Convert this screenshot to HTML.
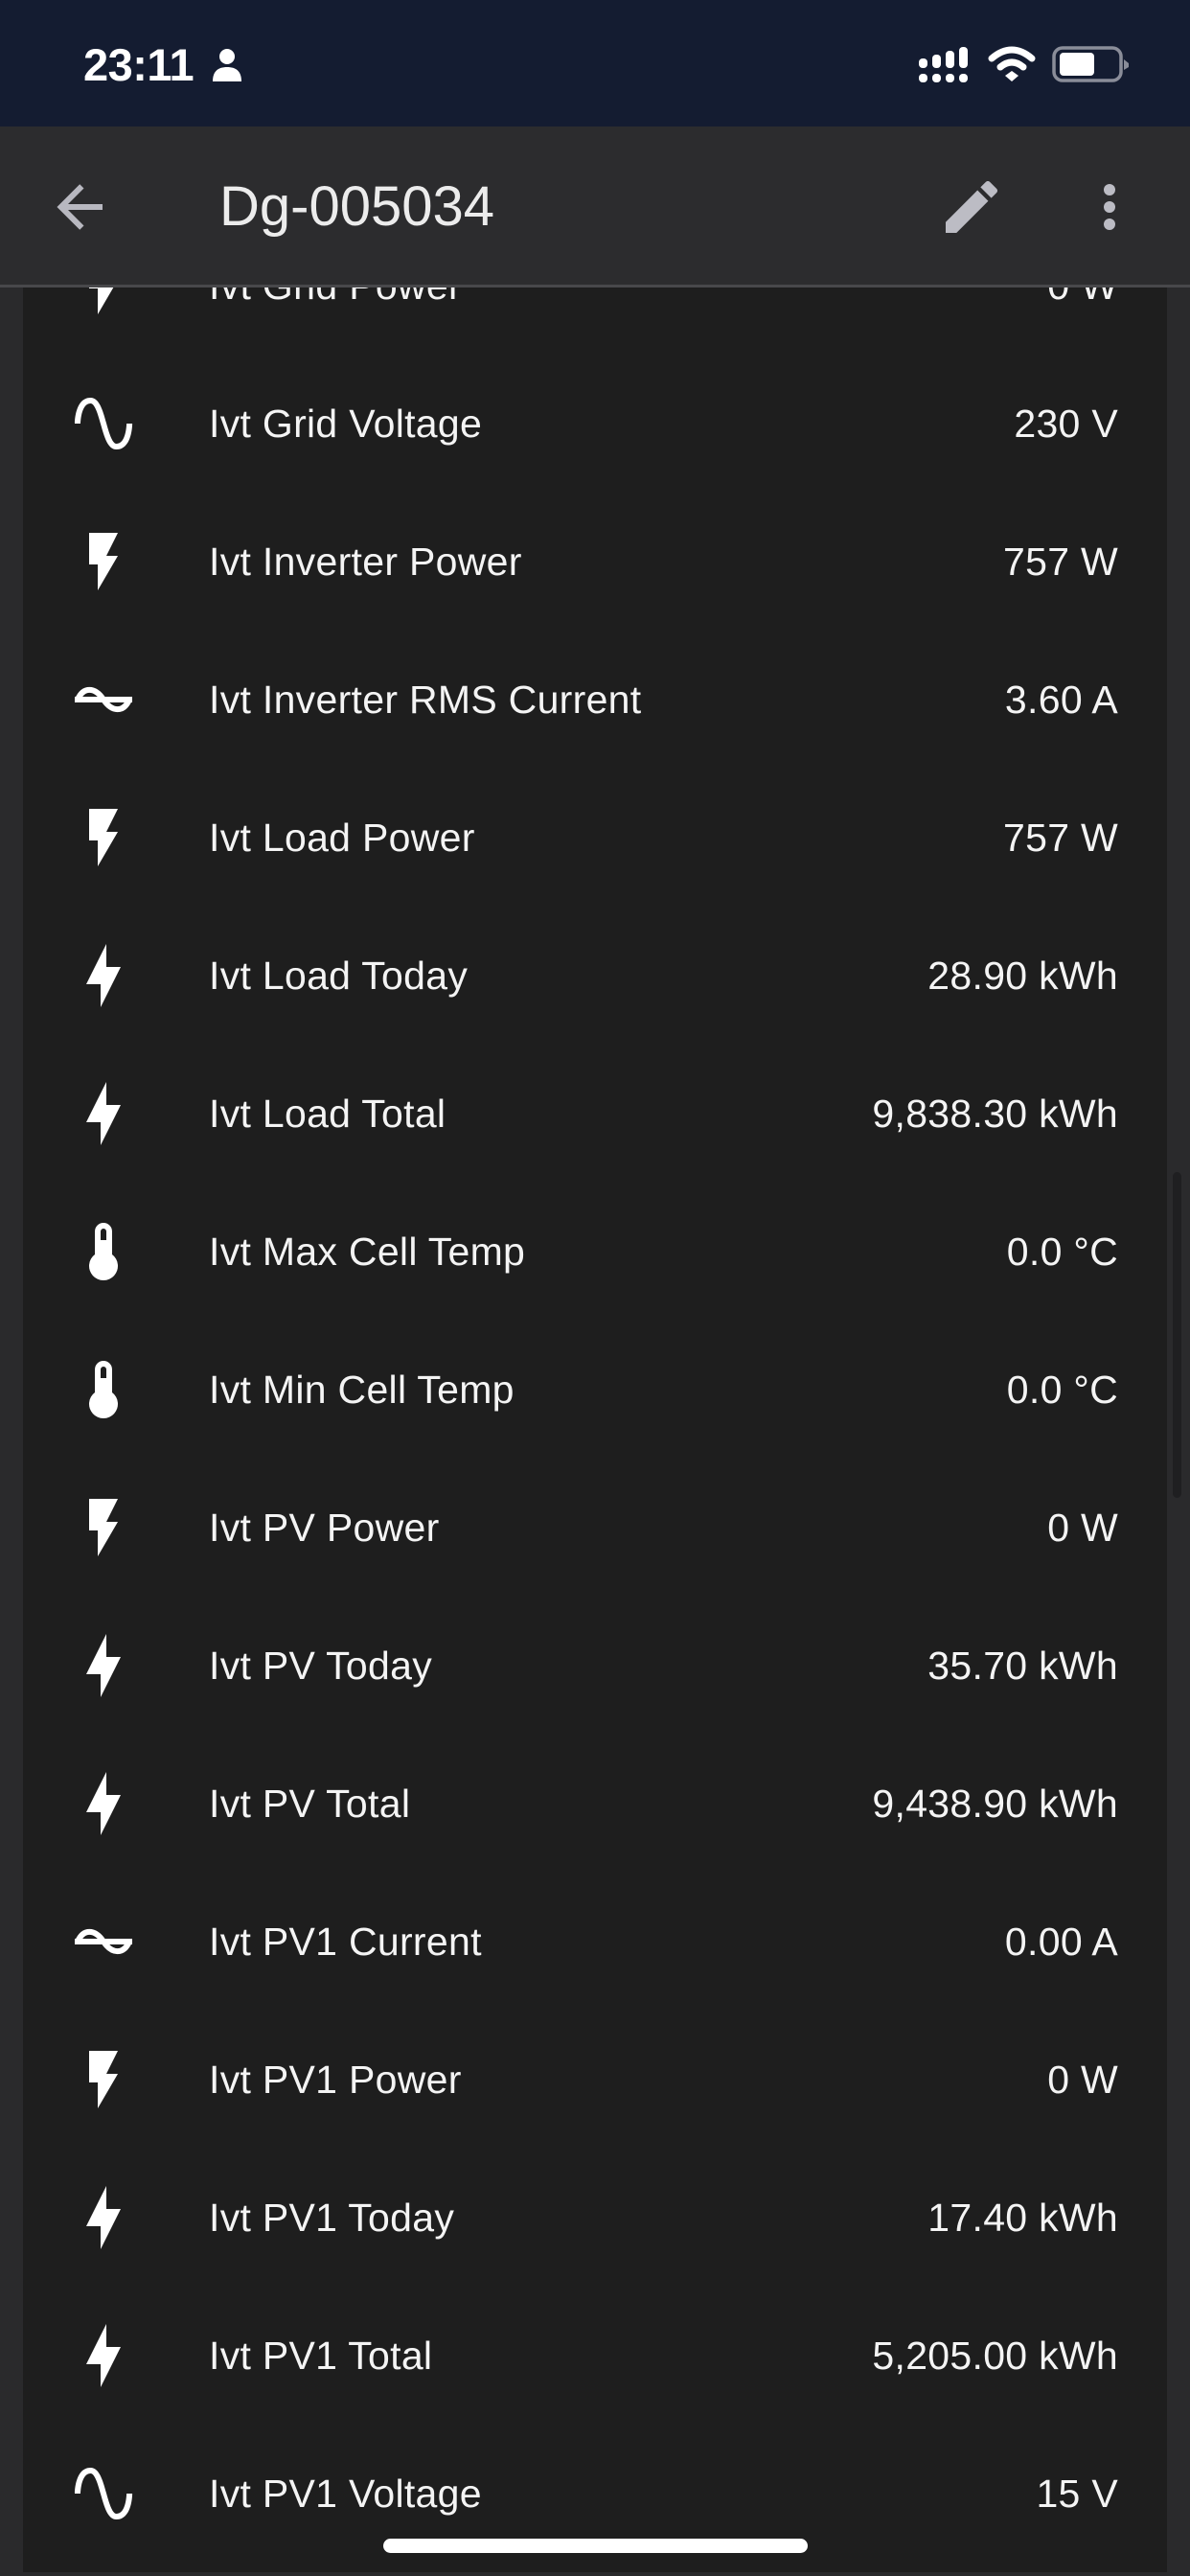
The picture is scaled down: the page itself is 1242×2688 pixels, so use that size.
<!DOCTYPE html>
<html><head><meta charset="utf-8"><style>
*{margin:0;padding:0;box-sizing:border-box}
body{width:1242px;height:2688px;background:#2a2a2c;overflow:hidden;position:relative;font-family:"Liberation Sans",Arial,sans-serif}
.status{position:absolute;left:0;top:0;width:1242px;height:132px;background:#141c31;z-index:5}
.header{position:absolute;left:0;top:132px;width:1242px;height:168px;background:#2c2c2e;border-bottom:3px solid #48484b;z-index:5}
.card{position:absolute;left:24px;top:0;width:1194px;height:2684px;background:#1e1e1e}
.row{position:absolute;left:0;width:1242px;height:144px;color:#f4f4f4;font-size:41px}
.row .ic{position:absolute;left:72px;top:36px;width:72px;height:72px}
.row .l{position:absolute;left:218px;top:0;line-height:144px;letter-spacing:0.3px}
.row .v{position:absolute;right:75px;top:0;line-height:144px;letter-spacing:0.3px}
</style></head><body>
<div class="card"></div>
<div style="position:absolute;left:1224px;top:1223px;width:9px;height:340px;border-radius:5px;background:#1f1f21"></div>

<div id="rows"></div>

<div class="status">
<div style="position:absolute;left:87px;top:40px;font-size:47px;font-weight:bold;color:#fff;line-height:56px;letter-spacing:-0.5px">23:11</div>
<svg style="position:absolute;left:220px;top:50px" width="34" height="36" viewBox="0 0 34 36"><circle cx="17" cy="9" r="8" fill="#fff"/><path d="M2 35 C2 24 8 20 17 20 C26 20 32 24 32 35Z" fill="#fff"/></svg>
<svg style="position:absolute;left:955px;top:45px" width="230" height="45" viewBox="955 45 230 45">
<g fill="#fff">
<rect x="959" y="61" width="9" height="10" rx="4"/><rect x="973" y="57" width="9" height="14" rx="4"/><rect x="987" y="53" width="9" height="18" rx="4"/><rect x="1001" y="49" width="9" height="22" rx="4"/>
<rect x="959" y="77" width="9" height="9" rx="4"/><rect x="973" y="77" width="9" height="9" rx="4"/><rect x="987" y="77" width="9" height="9" rx="4"/><rect x="1001" y="77" width="9" height="9" rx="4"/>
</g>
<g fill="none" stroke="#fff" stroke-width="7" stroke-linecap="round">
<path d="M1035 61 Q1056 43 1077 61"/><path d="M1044 70 Q1056 60 1068 70"/></g>
<path d="M1049 79 L1056 74 L1063 79 L1056 85Z" fill="#fff"/>
<rect x="1100" y="50" width="70" height="34" rx="9" fill="none" stroke="#8a8d99" stroke-width="3.5"/>
<rect x="1106" y="55" width="36" height="24" rx="4" fill="#fff"/>
<path d="M1173 62 L1178 66 L1178 70 L1173 73Z" fill="#8a8d99"/>
</svg>
</div>

<div class="header">
<svg style="position:absolute;left:47px;top:48px" width="72" height="72" viewBox="0 0 24 24"><path fill="#b8b8c0" d="M20,11V13H8L13.5,18.5L12.08,19.92L4.16,12L12.08,4.08L13.5,5.5L8,11H20Z"/></svg>
<div style="position:absolute;left:229px;top:40px;font-size:58px;color:#ececec;line-height:88px">Dg-005034</div>
<svg style="position:absolute;left:978px;top:48px" width="72" height="72" viewBox="0 0 24 24"><path fill="#bcbcc4" d="M20.71,7.04C21.1,6.65 21.1,6 20.71,5.63L18.37,3.29C18,2.9 17.35,2.9 16.96,3.29L15.12,5.12L18.87,8.87M3,17.25V21H6.75L17.81,9.93L14.06,6.18L3,17.25Z"/></svg>
<svg style="position:absolute;left:1146px;top:52px" width="24" height="64" viewBox="0 0 24 64"><g fill="#bcbcc4"><circle cx="12" cy="14" r="6"/><circle cx="12" cy="32" r="6"/><circle cx="12" cy="50" r="6"/></g></svg>
</div>

<div style="position:absolute;left:400px;top:2649px;width:443px;height:15px;border-radius:8px;background:#fff;z-index:6"></div>

<script>
var P={
flash:'<path fill="#fff" d="M7,2V13H10V22L17,10H13L17,2H7Z"/>',
bolt:'<path fill="#fff" d="M11 15H6L13 1V9H18L11 23V15Z"/>',
sine:'<path fill="#fff" d="M16.5,21C13.5,21 12.31,16.76 11.05,12.28C10.14,9.04 9,5 7.5,5C4.11,5 4,11.93 4,12H2C2,11.63 2.06,3 7.5,3C10.5,3 11.71,7.25 12.97,11.74C13.83,14.8 15,19 16.5,19C19.94,19 20.03,12.07 20.03,12H22.03C22.03,12.37 21.97,21 16.5,21Z"/>',
ac:'<rect x="2" y="11" width="20" height="2" fill="#fff"/><path d="M3,12 C5,7.5 9,7.5 12,12 C15,16.5 19,16.5 21,12" fill="none" stroke="#fff" stroke-width="2"/>',
thermo:'<path fill="#fff" fill-rule="evenodd" d="M15 13V5A3 3 0 0 0 9 5V13A5 5 0 1 0 15 13M12 4A1 1 0 0 1 13 5V8H11V5A1 1 0 0 1 12 4Z"/>'
};
var R=[
['flash','Ivt Grid Power','0 W'],
['sine','Ivt Grid Voltage','230 V'],
['flash','Ivt Inverter Power','757 W'],
['ac','Ivt Inverter RMS Current','3.60 A'],
['flash','Ivt Load Power','757 W'],
['bolt','Ivt Load Today','28.90 kWh'],
['bolt','Ivt Load Total','9,838.30 kWh'],
['thermo','Ivt Max Cell Temp','0.0 °C'],
['thermo','Ivt Min Cell Temp','0.0 °C'],
['flash','Ivt PV Power','0 W'],
['bolt','Ivt PV Today','35.70 kWh'],
['bolt','Ivt PV Total','9,438.90 kWh'],
['ac','Ivt PV1 Current','0.00 A'],
['flash','Ivt PV1 Power','0 W'],
['bolt','Ivt PV1 Today','17.40 kWh'],
['bolt','Ivt PV1 Total','5,205.00 kWh'],
['sine','Ivt PV1 Voltage','15 V']
];
var h='';
R.forEach(function(r,i){
h+='<div class="row" style="top:'+(226+144*i)+'px"><svg class="ic" viewBox="0 0 24 24">'+P[r[0]]+'</svg><div class="l">'+r[1]+'</div><div class="v">'+r[2]+'</div></div>';
});
document.getElementById('rows').innerHTML=h;
</script>
</body></html>
